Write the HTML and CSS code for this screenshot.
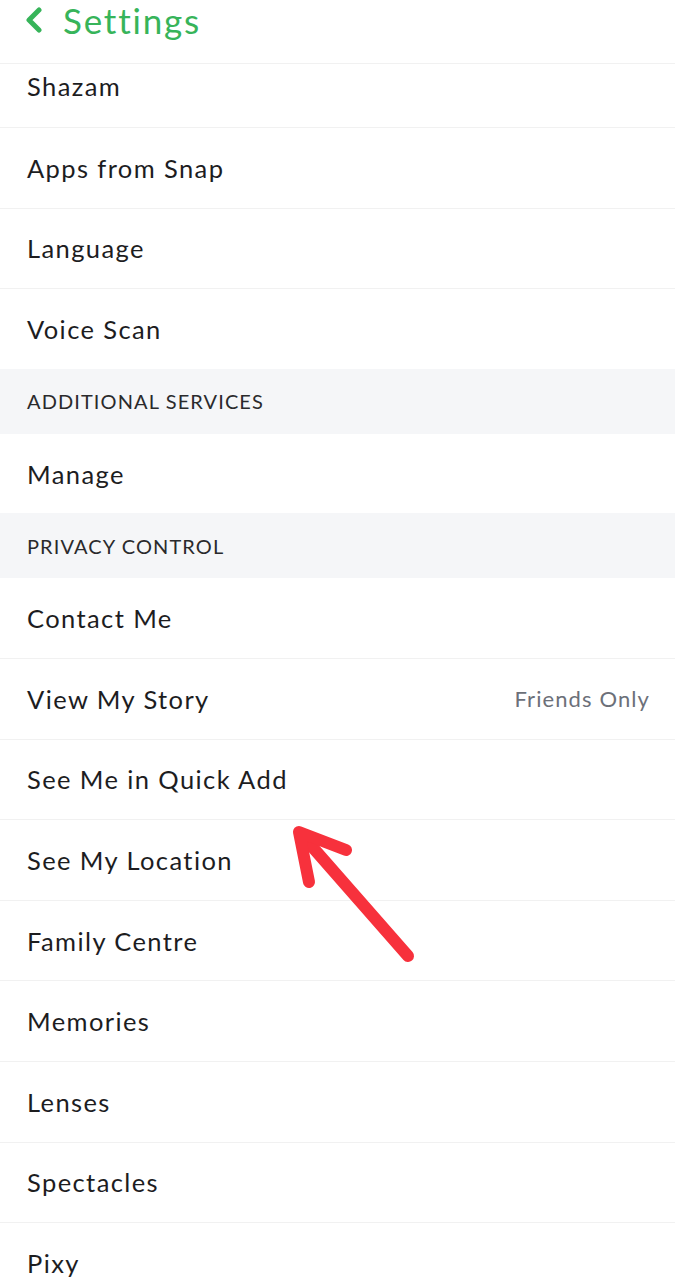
FILE: index.html
```html
<!DOCTYPE html>
<html>
<head>
  <meta charset="UTF-8">
  <title>Settings</title>
  <link rel="stylesheet" href="styles.css">
</head>
<body>
  <div id="screen">
    <div id="header">
      <svg class="back" width="20" height="26" viewBox="0 0 20 26">
        <path d="M15 3 L5 13 L15 23" fill="none" stroke="#37b45a" stroke-width="5" stroke-linecap="round" stroke-linejoin="round"/>
      </svg>
      <span class="title">Settings</span>
    </div>

    <div class="row first">Shazam</div>
    <div class="row">Apps from Snap</div>
    <div class="row">Language</div>
    <div class="row">Voice Scan</div>

    <div class="section">ADDITIONAL SERVICES</div>
    <div class="row">Manage</div>

    <div class="section">PRIVACY CONTROL</div>
    <div class="row">Contact Me</div>
    <div class="row">View My Story <span class="value">Friends Only</span></div>
    <div class="row">See Me in Quick Add</div>
    <div class="row">See My Location</div>
    <div class="row">Family Centre</div>
    <div class="row">Memories</div>
    <div class="row">Lenses</div>
    <div class="row">Spectacles</div>
    <div class="row">Pixy</div>

    <!-- annotation arrow drawn over the list -->
    <svg id="arrow" width="675" height="1280" viewBox="0 0 675 1280">
      <g fill="none" stroke="#f7313c" stroke-width="12" stroke-linecap="round" stroke-linejoin="round">
        <path d="M408 956 L301 834"/>
        <path d="M346 850 L299 832 L309 882"/>
      </g>
    </svg>
  </div>
</body>
</html>
```

FILE: styles.css
```css
body {
  margin: 0;
  font-family: Lato, "Noto Sans", sans-serif;
  background: #fff;
  color: #1d1d1f;
}

#screen {
  position: relative;
  width: 675px;
  height: 1280px;
  overflow: hidden;
}

#header {
  display: flex;
  align-items: center;
  gap: 19px;
  height: 64px;
  padding: 0 0 24px 24px;
  border-bottom: 1px solid #f1f1f1;
  box-sizing: border-box;
}

#header .title {
  font-size: 35px;
  color: #37b45a;
  letter-spacing: 1.8px;
}

.row {
  display: flex;
  align-items: center;
  justify-content: space-between;
  height: 80.6px;
  box-sizing: border-box;
  padding: 0 26px 0 27px;
  border-bottom: 1px solid #f1f1f1;
  font-size: 25.5px;
  letter-spacing: 1.4px;
}

.row.first {
  height: 64px;
  padding-bottom: 19px;
}

.row .value {
  font-size: 22px;
  color: #6c7079;
  letter-spacing: 1.1px;
  margin-right: -1px;
}

.section {
  display: flex;
  align-items: center;
  height: 65px;
  margin-top: -1px;
  padding-left: 27px;
  background: #f5f6f8;
  font-size: 20px;
  color: #2a2a2c;
  letter-spacing: 1.1px;
}

#arrow {
  position: absolute;
  top: 0;
  left: 0;
}
```
